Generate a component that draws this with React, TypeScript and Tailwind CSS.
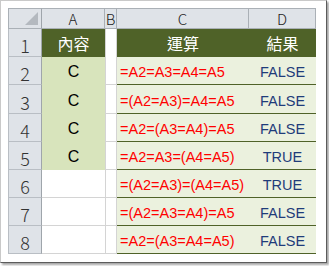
import React from "react";

const rows = [
  { a: "C", f: "=A2=A3=A4=A5", r: "FALSE" },
  { a: "C", f: "=(A2=A3)=A4=A5", r: "FALSE" },
  { a: "C", f: "=A2=(A3=A4)=A5", r: "FALSE" },
  { a: "C", f: "=A2=A3=(A4=A5)", r: "TRUE" },
  { a: "", f: "=(A2=A3)=(A4=A5)", r: "TRUE" },
  { a: "", f: "=(A2=A3=A4)=A5", r: "FALSE" },
  { a: "", f: "=A2=(A3=A4=A5)", r: "FALSE" },
];

const heights = ["h-[28px]", "h-[29px]", "h-[28px]", "h-[28px]", "h-[28px]", "h-[28px]", "h-[28px]"];

const sans = "font-['Liberation_Sans',Arial,sans-serif]";
const head = "font-['Noto_Sans_CJK_TC',sans-serif]";

export default function App() {
  return (
    <div className="w-[329px] h-[266px] bg-white">
      <div className="w-[327px] h-[263px] bg-white border border-[#c9c9c9] border-r-[#5c5c5c] border-b-[#5c5c5c] shadow-[2px_2px_2px_rgba(0,0,0,0.35)] pl-[7px] pt-[7px]">
        <div className="grid grid-cols-[34px_63px_12px_132px_67px] w-[308px]">
          {/* column headers */}
          <div className="h-[21px] bg-[#dfe3e8] border border-[#aab0b6] border-r-[#9fa5ab] relative">
            <div className="absolute right-[3px] bottom-[3px] w-0 h-0 border-l-[13px] border-l-transparent border-b-[13px] border-b-[#b4b9bf]" />
          </div>
          {["A", "B", "C", "D"].map((c) => (
            <div
              key={c}
              className={`h-[21px] bg-[#dfe3e8] border-t border-b border-r border-[#aab0b6] flex items-center justify-center text-[15px] text-[#222] ${head} font-light leading-none`}
            >
              {c}
            </div>
          ))}

          {/* row 1 */}
          <div className={`h-[28px] bg-[#dfe3e8] border-b border-r border-l border-[#b9bec4] border-r-[#9fa5ab] flex items-end justify-center pb-[2px] text-[18px] text-[#333] ${head} font-light leading-none`}>
            1
          </div>
          <div className={`h-[28px] bg-[#4f6228] flex items-center justify-center text-white text-[16px] ${head}`}>內容</div>
          <div className="h-[28px] bg-white border-l border-r border-[#d4d4d4]" />
          <div className={`h-[28px] bg-[#4f6228] flex items-center justify-center text-white text-[16px] ${head}`}>運算</div>
          <div className={`h-[28px] bg-[#4f6228] flex items-center justify-center text-white text-[16px] ${head}`}>結果</div>

          {rows.map((row, i) => {
            const h = heights[i];
            const green = row.a !== "";
            return (
              <React.Fragment key={i}>
                <div className={`${h} bg-[#dfe3e8] border-b border-r border-l border-[#b9bec4] border-r-[#9fa5ab] flex items-end justify-center pb-[2px] text-[18px] text-[#333] ${head} font-light leading-none`}>
                  {i + 2}
                </div>
                <div
                  className={`${h} ${green ? "bg-[#d8e4bc]" : "bg-white border-b border-[#d4d4d4]"} flex items-end justify-center pb-[5px] text-[16px] text-black ${sans} leading-none`}
                >
                  {row.a}
                </div>
                <div className="bg-white border-l border-r border-b border-[#d4d4d4]" />
                <div className={`${h} bg-[#ebf1de] border-b border-[#4f6228] flex items-end pl-[3px] pb-[5px] text-[14.5px] text-[#ff0000] ${sans} leading-none`}>
                  {row.f}
                </div>
                <div className={`${h} bg-[#ebf1de] border-b border-[#4f6228] flex items-end justify-center pb-[5px] text-[14.5px] text-[#1f3c7a] ${sans} leading-none`}>
                  {row.r}
                </div>
              </React.Fragment>
            );
          })}
        </div>
      </div>
    </div>
  );
}
